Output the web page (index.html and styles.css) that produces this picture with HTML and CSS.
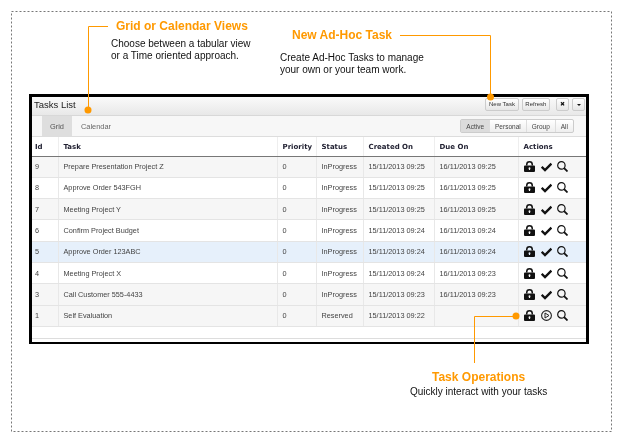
FILE: index.html
```html
<!DOCTYPE html>
<html lang="en">
<head>
<meta charset="utf-8">
<title>Tasks List</title>
<link rel="stylesheet" href="styles.css">
</head>
<body>
<svg class="defs" width="0" height="0" aria-hidden="true">
  <symbol id="i-lock" viewBox="0 0 11 11">
    <path d="M2 4.600V3.400a3.500 3.400 0 0 1 7 0v1.200H7.500V3.500a2 1.900 0 0 0-4 0v1.100z" fill="#111"/>
    <path d="M1 4.600h9a1 1 0 0 1 1 1v4.400a1 1 0 0 1-1 1H1a1 1 0 0 1-1-1V5.600a1 1 0 0 1 1-1zM5.500 6.300a1 1 0 0 0-.6 1.800v.8h1.200v-.8a1 1 0 0 0-.6-1.800z" fill="#111" fill-rule="evenodd"/>
  </symbol>
  <symbol id="i-check" viewBox="0 0 11 11">
    <path d="M.7 5.800l3.300 3.300L10.400 2.600" fill="none" stroke="#111" stroke-width="2.300"/>
  </symbol>
  <symbol id="i-search" viewBox="0 0 11 11">
    <circle cx="4.400" cy="4.400" r="3.700" fill="none" stroke="#111" stroke-width="1.200"/>
    <path d="M7.100 7.100l3.400 3.400" fill="none" stroke="#111" stroke-width="1.800"/>
  </symbol>
  <symbol id="i-play" viewBox="0 0 11 11">
    <circle cx="5.500" cy="5.500" r="4.900" fill="none" stroke="#222" stroke-width="1.100"/>
    <path d="M4 3v5l4-2.500z" fill="none" stroke="#222"/>
  </symbol>
</svg>

<main class="sheet">
  <svg class="leaders" width="622" height="442" aria-hidden="true">
    <rect x="11.500" y="11.500" width="600" height="420" fill="none" stroke="#777" stroke-dasharray="2 2"/>
    <path d="M108 26.500H88.500V110M400 35.500H490.500V97M516 316.500H474.500V363" fill="none" stroke="#f90" stroke-width="1"/>
    <circle cx="88" cy="110" r="3.500" fill="#f90"/>
    <circle cx="490.500" cy="97" r="3.500" fill="#f90"/>
    <circle cx="516" cy="316" r="3.500" fill="#f90"/>
  </svg>

  <header class="intro">
    <section class="note note-views">
      <h2 class="note-title">Grid or Calendar Views</h2>
      <p class="note-text">Choose between a tabular view<br>or a Time oriented approach.</p>
    </section>
    <section class="note note-new">
      <h2 class="note-title">New Ad-Hoc Task</h2>
      <p class="note-text">Create Ad-Hoc Tasks to manage<br>your own or your team work.</p>
    </section>
  </header>

  <section class="window">
    <div class="titlebar">
      <span class="window-title">Tasks List</span>
      <div class="title-actions">
        <button class="btn">New Task</button>
        <button class="btn">Refresh</button>
        <button class="btn btn-icon btn-first">&#10006;</button>
        <button class="btn btn-icon"><span class="caret"></span></button>
      </div>
    </div>
    <div class="toolbar">
      <nav class="tabs">
        <span class="tab tab-on">Grid</span>
        <span class="tab">Calendar</span>
      </nav>
      <div class="filters">
        <span class="filter filter-on">Active</span>
        <span class="filter">Personal</span>
        <span class="filter">Group</span>
        <span class="filter">All</span>
      </div>
    </div>
    <table class="grid">
      <colgroup>
        <col class="c-id"><col class="c-task"><col class="c-pri"><col class="c-status"><col class="c-created"><col class="c-due"><col class="c-actions">
      </colgroup>
      <thead>
        <tr><th>Id</th><th>Task</th><th>Priority</th><th>Status</th><th>Created On</th><th>Due On</th><th>Actions</th></tr>
      </thead>
      <tbody>
        <tr class="alt"><td>9</td><td>Prepare Presentation Project Z</td><td>0</td><td>InProgress</td><td>15/11/2013 09:25</td><td>16/11/2013 09:25</td><td class="ops"><svg class="ic"><use href="#i-lock"/></svg><svg class="ic ic-mid"><use href="#i-check"/></svg><svg class="ic"><use href="#i-search"/></svg></td></tr>
        <tr><td>8</td><td>Approve Order 543FGH</td><td>0</td><td>InProgress</td><td>15/11/2013 09:25</td><td>16/11/2013 09:25</td><td class="ops"><svg class="ic"><use href="#i-lock"/></svg><svg class="ic ic-mid"><use href="#i-check"/></svg><svg class="ic"><use href="#i-search"/></svg></td></tr>
        <tr class="alt"><td>7</td><td>Meeting Project Y</td><td>0</td><td>InProgress</td><td>15/11/2013 09:25</td><td>16/11/2013 09:25</td><td class="ops"><svg class="ic"><use href="#i-lock"/></svg><svg class="ic ic-mid"><use href="#i-check"/></svg><svg class="ic"><use href="#i-search"/></svg></td></tr>
        <tr><td>6</td><td>Confirm Project Budget</td><td>0</td><td>InProgress</td><td>15/11/2013 09:24</td><td>16/11/2013 09:24</td><td class="ops"><svg class="ic"><use href="#i-lock"/></svg><svg class="ic ic-mid"><use href="#i-check"/></svg><svg class="ic"><use href="#i-search"/></svg></td></tr>
        <tr class="sel"><td>5</td><td>Approve Order 123ABC</td><td>0</td><td>InProgress</td><td>15/11/2013 09:24</td><td>16/11/2013 09:24</td><td class="ops"><svg class="ic"><use href="#i-lock"/></svg><svg class="ic ic-mid"><use href="#i-check"/></svg><svg class="ic"><use href="#i-search"/></svg></td></tr>
        <tr><td>4</td><td>Meeting Project X</td><td>0</td><td>InProgress</td><td>15/11/2013 09:24</td><td>16/11/2013 09:23</td><td class="ops"><svg class="ic"><use href="#i-lock"/></svg><svg class="ic ic-mid"><use href="#i-check"/></svg><svg class="ic"><use href="#i-search"/></svg></td></tr>
        <tr class="alt"><td>3</td><td>Call Customer 555-4433</td><td>0</td><td>InProgress</td><td>15/11/2013 09:23</td><td>16/11/2013 09:23</td><td class="ops"><svg class="ic"><use href="#i-lock"/></svg><svg class="ic ic-mid"><use href="#i-check"/></svg><svg class="ic"><use href="#i-search"/></svg></td></tr>
        <tr class="alt"><td>1</td><td>Self Evaluation</td><td>0</td><td>Reserved</td><td>15/11/2013 09:22</td><td></td><td class="ops"><svg class="ic"><use href="#i-lock"/></svg><svg class="ic ic-mid"><use href="#i-play"/></svg><svg class="ic"><use href="#i-search"/></svg></td></tr>
      </tbody>
    </table>
    <div class="window-foot"></div>
  </section>

  <section class="note note-ops">
    <h2 class="note-title">Task Operations</h2>
    <p class="note-text">Quickly interact with your tasks</p>
  </section>
</main>
</body>
</html>
```
FILE: styles.css
```css
* { box-sizing: border-box; }
html, body { margin: 0; padding: 0; background: #fff; }
body { width: 622px; height: 442px; overflow: hidden; font-family: "Liberation Sans", Arial, sans-serif; color: #222; }
.defs { position: absolute; }

.sheet { position: relative; width: 600px; height: 421px; margin: 11px 0 0 11px; padding: 0 0 0 17px; border: 1px solid transparent; filter: blur(0.3px); }
.leaders { position: absolute; left: -12px; top: -12px; pointer-events: none; }

.intro { display: flex; height: 82px; }
.note-title { margin: 0; font-size: 12px; line-height: 16px; font-weight: bold; color: #f90; }
.note-text { margin: 0; font-size: 10px; line-height: 12px; color: #111; }
.note-views { margin: 6px 0 0 82px; width: 169px; }
.note-views .note-title { margin-left: 5px; }
.note-views .note-text { margin-top: 4px; }
.note-new { margin: 15px 0 0 0; }
.note-new .note-title { margin-left: 12px; }
.note-new .note-text { margin-top: 9px; }
.note-ops { width: 560px; margin-top: 25px; padding-left: 381px; }
.note-ops .note-title { margin-left: 22px; }
.note-ops .note-text { margin-top: 1px; }

.window { width: 560px; height: 250px; border: 3px solid #000; border-bottom-width: 2px; background: #fff; }
.titlebar { display: flex; align-items: flex-start; justify-content: space-between; height: 19px; padding: 1px 1px 0 2px; background: linear-gradient(#fafafa, #e8e8e8); border-bottom: 1px solid #d8d8d8; }
.window-title { font-size: 9.500px; line-height: 14px; color: #222; }
.title-actions { display: flex; gap: 3px; }
.btn { height: 13px; padding: 0 2.700px; font: 6px/11px "Liberation Sans", Arial, sans-serif; color: #333; background: linear-gradient(#fff, #e6e6e6); border: 1px solid #ccc; border-radius: 2px; }
.btn-icon { display: flex; align-items: center; justify-content: center; width: 13px; padding: 0; color: #111; }
.btn-first { margin-left: 3px; }
.caret { width: 0; height: 0; border: 2.500px solid transparent; border-top-color: #111; border-bottom: 0; }

.toolbar { display: flex; justify-content: space-between; align-items: center; height: 21px; padding: 0 12px 0 10px; background: #f7f7f7; border-bottom: 1px solid #ddd; }
.tabs { display: flex; align-self: stretch; }
.tab { display: flex; align-items: center; padding: 0 8px 0 9px; font-size: 7.400px; color: #666; }
.tab-on { padding: 0 8px; background: #dedede; color: #555; }
.filters { display: flex; height: 14px; background: linear-gradient(#fff, #eee); border: 1px solid #ccc; border-radius: 2px; }
.filter { display: flex; align-items: center; padding: 0 5px; font-size: 6.500px; color: #444; border-left: 1px solid #ddd; }
.filter:first-child { border-left: 0; }
.filter-on { background: #dcdcdc; }

.grid { width: 554px; table-layout: fixed; border-collapse: collapse; }
.c-id { width: 26px; } .c-task { width: 219px; } .c-pri { width: 39px; } .c-status { width: 47px; }
.c-created { width: 71px; } .c-due { width: 84px; } .c-actions { width: 68px; }
.grid th { height: 19px; padding: 1px 0 0 5px; text-align: left; font: bold 7px "DejaVu Sans", Verdana, sans-serif; color: #223; border-left: 1px solid #eee; border-bottom: 1px solid #777; }
.grid th:first-child { padding-left: 3px; border-left: 0; }
.grid td { height: 21.300px; padding: 0 0 0 5px; font-size: 7.300px; color: #444; border-left: 1px solid #e8e8e8; border-bottom: 1px solid #e4e4e4; white-space: nowrap; }
.grid td:first-child { padding-left: 3px; border-left: 0; }
.alt td { background: #f6f6f6; }
.sel td { background: #e6f0fb; }
.grid .ops { padding-left: 5px; line-height: 0; }
.ic { display: inline-block; width: 11px; height: 11px; margin-right: 5px; vertical-align: middle; }
.ic-mid { margin-left: 1px; }
.window-foot { height: 12px; border-bottom: 1px solid #ddd; }
```
